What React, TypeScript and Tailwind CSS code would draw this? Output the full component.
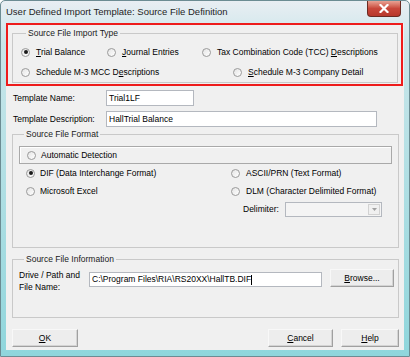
import React from 'react';

const FONT = "font-['Liberation_Sans',Arial,sans-serif]";

function Radio({ checked = false }: { checked?: boolean }) {
	return (
		<span className="w-[9px] h-[9px] rounded-full border border-[#9a9a9a] bg-gradient-to-br from-[#e4e4e4] to-white flex items-center justify-center shrink-0">
			{checked && <span className="w-[4px] h-[4px] rounded-full bg-[#1a1a1a]" />}
		</span>
	);
}

function Option({ label, checked, gap = 'gap-[6px]' }: { label: React.ReactNode; checked?: boolean; gap?: string }) {
	return (
		<div className={`flex items-center h-[12px] ${gap}`}>
			<Radio checked={checked} />
			<span className="whitespace-nowrap leading-[12px]">{label}</span>
		</div>
	);
}

function Btn({ children, w }: { children: React.ReactNode; w: string }) {
	return (
		<div
			className={`${w} h-[18px] flex items-center justify-center bg-[#ededed] border border-t-[#f8f8f8] border-l-[#f8f8f8] border-r-[#a0a0a0] border-b-[#a0a0a0] shadow-[inset_-1px_-1px_0_#d4d4d4]`}
		>
			{children}
		</div>
	);
}

function Group({ title, className, children }: { title: string; className: string; children: React.ReactNode }) {
	return (
		<fieldset className={`border border-[#c9c9c9] ${className}`}>
			<legend className="ml-[5px] px-[2px] leading-[10px] text-[#1a1a1a]">{title}</legend>
			{children}
		</fieldset>
	);
}

export default function App() {
	return (
		<div className={`${FONT} w-[410px] h-[357px] flex flex-col bg-gradient-to-b from-[#e9eef3] via-[#c9e6ea] via-[12%] to-[#8fd6dc] border border-[#6c8c93] rounded-t-[5px] text-[8.5px] text-black overflow-hidden`}>
			{/* Title bar */}
			<div className="h-[22px] flex items-start justify-between shrink-0">
				<span className="pl-[5px] pt-[5px] text-[9.5px] leading-[12px] text-[#1e1e1e]">
					User Defined Import Template: Source File Definition
				</span>
				<div className="mr-[8px] w-[34px] h-[16px] rounded-b-[4px] border border-t-0 border-[#6b2a22] bg-gradient-to-b from-[#e8a294] via-[#c8473a] to-[#b7382c] flex items-center justify-center">
					<svg width="10" height="9" viewBox="0 0 10 9">
						<path d="M1.5 1 L8.5 8 M8.5 1 L1.5 8" stroke="#fff" strokeWidth="2.2" strokeLinecap="square" />
					</svg>
				</div>
			</div>

			{/* Client */}
			<div className="mx-[5px] mb-[6px] flex-1 bg-[#f0f0f0] flex flex-col">
				{/* Highlighted import type */}
				<div className="h-[63px] mr-[1px] border-2 border-[#ee1c1c] flex flex-col">
					<Group title="Source File Import Type" className="ml-[4px] mr-[3px] mt-[3px] h-[55px] pl-[8px]">
						<div className="flex mt-[8px]">
							<div className="w-[86px]"><Option checked label={<><u>T</u>rial Balance</>} /></div>
							<div className="w-[95px]"><Option label={<><u>J</u>ournal Entries</>} /></div>
							<Option label={<>Tax Combination Code (TCC) <u>D</u>escriptions</>} />
						</div>
						<div className="flex mt-[8px]">
							<div className="w-[212px]"><Option label={<>Schedule M-3 MCC D<u>e</u>scriptions</>} /></div>
							<Option label={<><u>S</u>chedule M-3 Company Detail</>} />
						</div>
					</Group>
				</div>

				{/* Template fields */}
				<div className="flex items-center mt-[4px] h-[16px]">
					<span className="w-[100px] pl-[7px]">Template Name:</span>
					<div className="w-[88px] h-[16px] bg-white border border-[#b4b8bf] pl-[2px] leading-[14px]">Trial1LF</div>
				</div>
				<div className="flex items-center mt-[5px] h-[16px]">
					<span className="w-[100px] pl-[7px]">Template Description:</span>
					<div className="w-[271px] h-[16px] bg-white border border-[#b4b8bf] pl-[2px] leading-[14px]">HallTrial Balance</div>
				</div>

				{/* Source File Format */}
				<Group title="Source File Format" className="ml-[6px] mr-[5px] mt-[2px] h-[119px] px-[6px]">
					<div className="mt-[7px] h-[18px] border border-[#a9a9a9] shadow-[inset_1px_1px_0_#fff] flex items-center pl-[7px]">
						<Option label="Automatic Detection" gap="gap-[5px]" />
					</div>
					<div className="grid grid-cols-[205px_1fr] pl-[7px] mt-[3px] gap-y-[6px]">
						<Option checked label="DIF (Data Interchange Format)" gap="gap-[5px]" />
						<Option label="ASCII/PRN (Text Format)" />
						<Option label="Microsoft Excel" gap="gap-[5px]" />
						<Option label="DLM (Character Delimited Format)" />
						<div />
						<div className="flex items-center pl-[12px] mt-[-1px]">
							<span className="w-[42px]">Delimiter:</span>
							<div className="w-[97px] h-[15px] border border-[#b4b8bf] bg-[#f4f4f4] flex justify-end items-stretch p-[1px]">
								<div className="w-[12px] border border-[#d2d2d2] bg-[#f0f0f0] flex items-center justify-center">
									<svg width="5" height="3" viewBox="0 0 5 3">
										<path d="M0 0 H5 L2.5 3 Z" fill="#a0a0a0" />
									</svg>
								</div>
							</div>
						</div>
					</div>
				</Group>

				{/* Source File Information */}
				<Group title="Source File Information" className="ml-[6px] mr-[5px] mt-[6px] h-[64px] pl-[6px] pr-[3px]">
					<div className="flex items-start mt-[5px]">
						<div className="w-[70px] leading-[12px] pt-[0px]">
							Drive / Path and
							<br />
							File Name:
						</div>
						<div className="mt-[3px] w-[233px] h-[15px] bg-white border border-[#b4b8bf] pl-[2px] leading-[13px] whitespace-nowrap">
							C:\Program Files\RIA\RS20XX\HallTB.DIF<span className="inline-block w-px h-[10px] bg-black align-middle" />
						</div>
						<div className="ml-[8px]">
							<Btn w="w-[64px]"><span><u>B</u>rowse...</span></Btn>
						</div>
					</div>
				</Group>

				{/* Buttons */}
				<div className="flex items-center mt-[11px] ml-[6px] mr-[5px]">
					<Btn w="w-[66px]"><span><u>O</u>K</span></Btn>
					<div className="flex-1" />
					<Btn w="w-[65px]"><span><u>C</u>ancel</span></Btn>
					<div className="w-[8px]" />
					<Btn w="w-[58px]"><span><u>H</u>elp</span></Btn>
				</div>
			</div>
		</div>
	);
}
